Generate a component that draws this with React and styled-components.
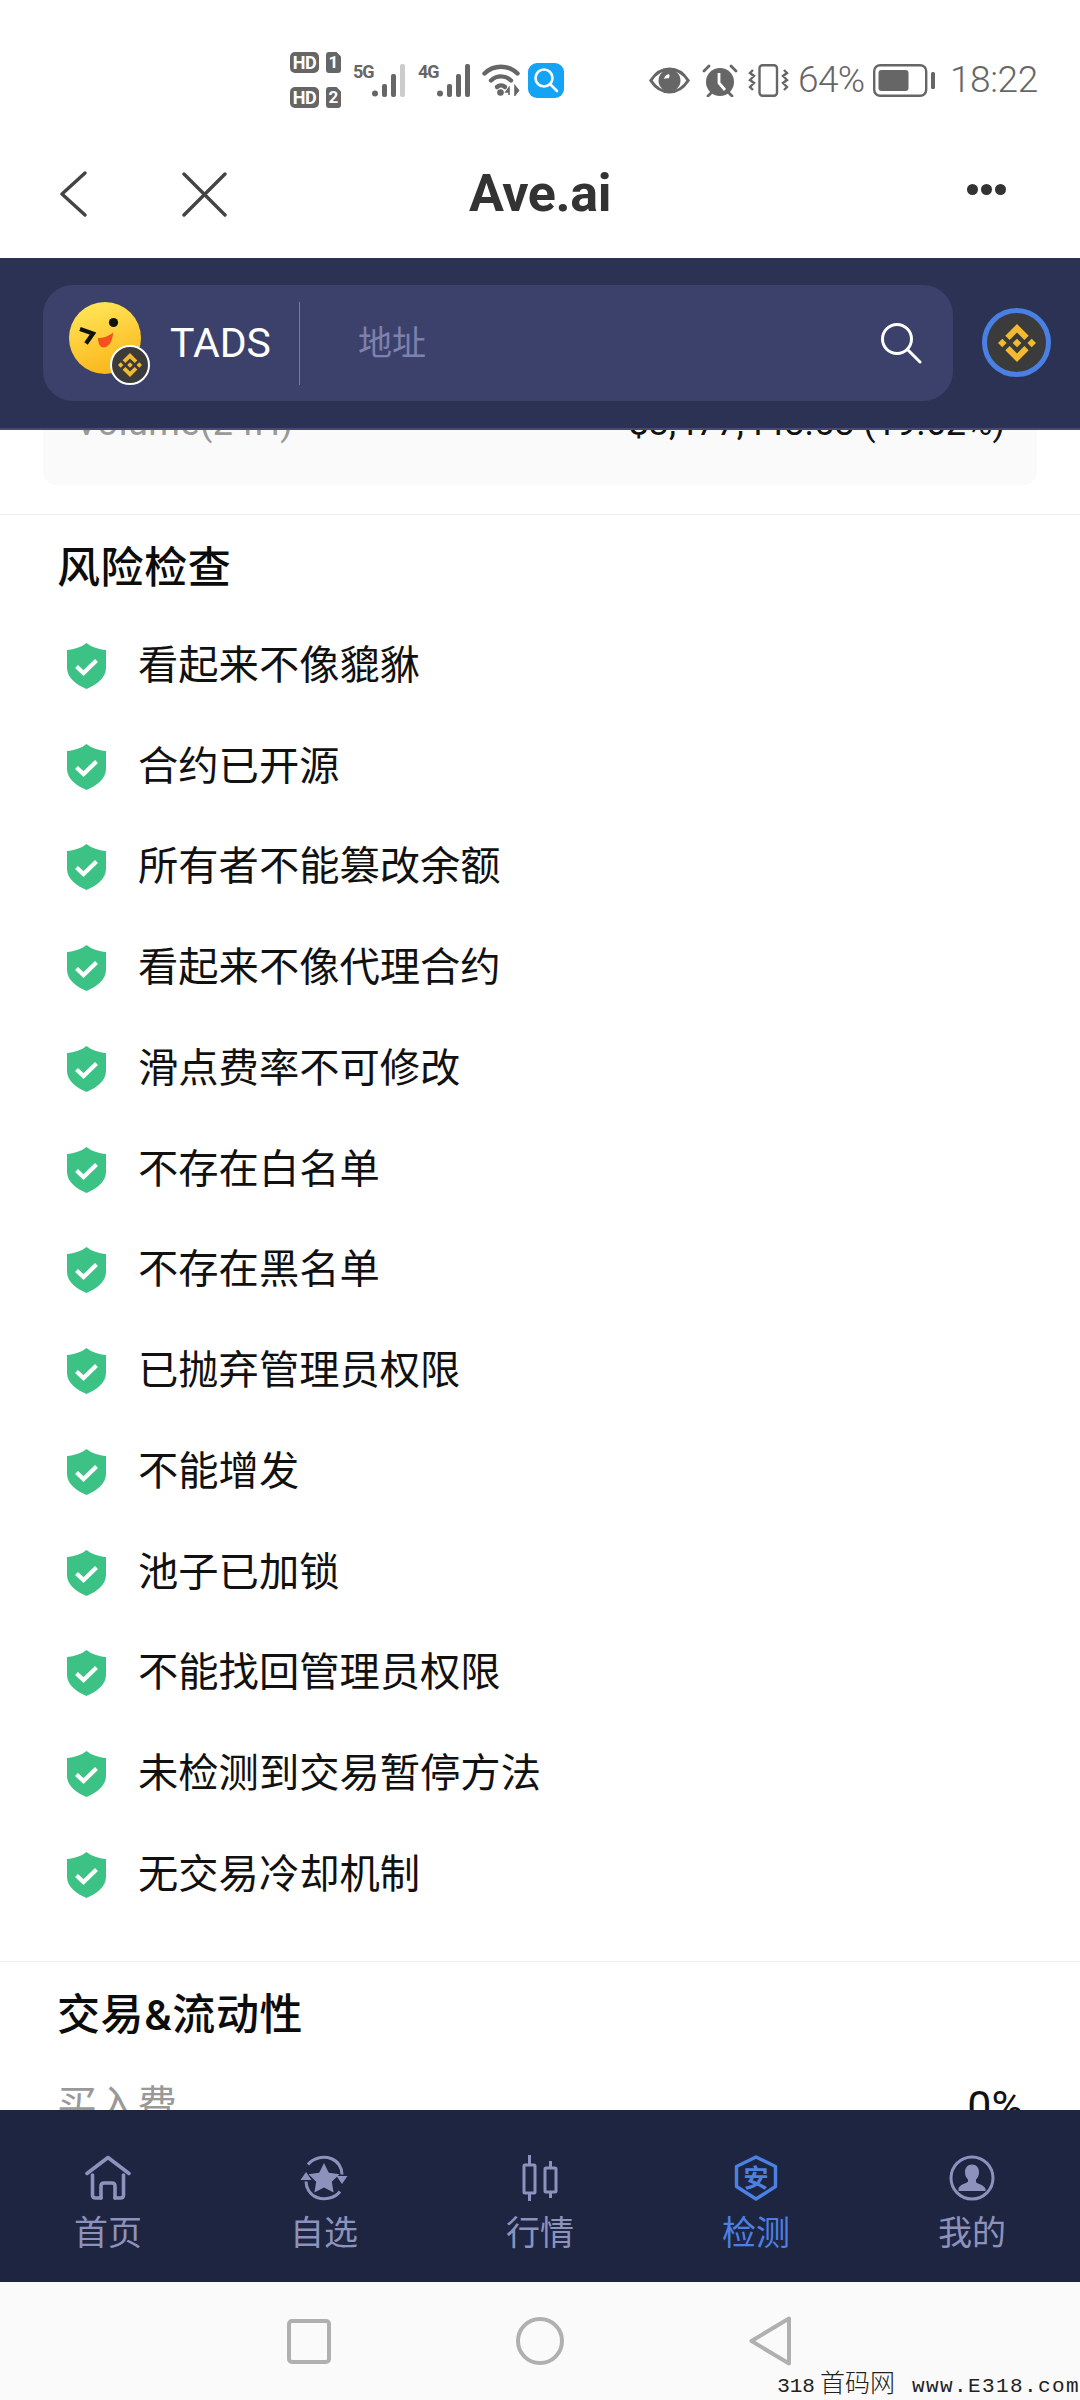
import React from "react";
import styled, { createGlobalStyle } from "styled-components";

const SANS = `Roboto, "Noto Sans CJK SC", sans-serif`;

const Global = createGlobalStyle`
  html, body { margin: 0; padding: 0; background: #fff; }
  * { box-sizing: border-box; }
  body { font-family: ${SANS}; }
`;

const Screen = styled.div`
  width: 1080px;
  height: 2400px;
  display: flex;
  flex-direction: column;
  overflow: hidden;
  position: relative;
  background: #fff;
`;

/* ---------- status bar ---------- */
const StatusBar = styled.div`
  height: 130px;
  padding: 30px 43px 0 290px;
  display: flex;
  align-items: center;
  flex: none;
`;
const StatusLeft = styled.div`
  display: flex;
  align-items: center;
`;
const StatusRight = styled.div`
  margin-left: auto;
  display: flex;
  align-items: center;
  color: #666;
`;
const SimStack = styled.div`
  display: flex;
  flex-direction: column;
  gap: 14px;
  margin-right: 12px;
`;
const SimLine = styled.div`
  display: flex;
  gap: 7px;
`;
const HdTag = styled.span`
  width: 29px;
  height: 21px;
  border-radius: 5px;
  background: #666;
  color: #fff;
  font: 700 18px/21px ${SANS};
  letter-spacing: -0.5px;
  text-align: center;
`;
const SimNum = styled.span`
  width: 15px;
  height: 21px;
  border-radius: 3px;
  background: #666;
  color: #fff;
  font: 700 17px/21px ${SANS};
  text-align: center;
  clip-path: polygon(0 0, 70% 0, 100% 22%, 100% 100%, 0 100%);
`;
const Signal = styled.div`
  display: flex;
  height: 33px;
  margin-right: ${(p) => p.$after}px;
`;
const NetLabel = styled.span`
  width: 19px;
  font: 700 18px/16px ${SANS};
  letter-spacing: -1px;
  color: #666;
  white-space: nowrap;
`;
const Gapped = styled.span`
  display: flex;
  margin-right: ${(p) => p.$after || 0}px;
`;
const Percent = styled.span`
  font: 300 37px/40px ${SANS};
  width: 66px;
  margin-right: 9px;
  white-space: nowrap;
  letter-spacing: -0.6px;
`;
const Clock = styled.span`
  font: 300 37px/40px ${SANS};
  width: 87px;
  white-space: nowrap;
  letter-spacing: -0.4px;
`;

/* ---------- nav ---------- */
const NavBar = styled.div`
  height: 128px;
  flex: none;
  display: grid;
  grid-template-columns: 1fr auto 1fr;
  align-items: center;
  padding: 0 60px;
  background: #fff;
`;
const NavLeft = styled.div`
  display: flex;
  gap: 95px;
  align-items: center;
`;
const NavTitle = styled.div`
  font: 700 52px/60px Roboto, sans-serif;
  color: #333;
  letter-spacing: -0.4px;
`;
const NavRight = styled.div`
  display: flex;
  justify-content: flex-end;
  gap: 3px;
  margin: -10px 14px 0 0;
`;
const Dot = styled.i`
  width: 11px;
  height: 11px;
  border-radius: 50%;
  background: #333;
`;

/* ---------- search header ---------- */
const Header = styled.div`
  height: 172px;
  flex: none;
  background: #2c3254;
  border-bottom: 2px solid #474b70;
  padding: 27px 0 0 43px;
  display: flex;
  align-items: flex-start;
  position: relative;
  z-index: 1;
`;
const Pill = styled.div`
  width: 910px;
  height: 116px;
  border-radius: 30px;
  background: #3c416b;
  display: flex;
  align-items: center;
  padding: 0 31px 0 26px;
`;
const Avatar = styled.div`
  position: relative;
  width: 72px;
  height: 72px;
  flex: none;
  margin-top: -10px;
`;
const BadgeCoin = styled.span`
  position: absolute;
  left: 41px;
  top: 43px;
  width: 40px;
  height: 40px;
  border-radius: 50%;
  background: #3b3b3b;
  border: 2px solid #fff;
  display: flex;
  align-items: center;
  justify-content: center;
`;
const Symbol = styled.span`
  margin-left: 29px;
  width: 99px;
  color: #fff;
  font: 400 41px/44px Roboto, sans-serif;
  white-space: nowrap;
`;
const VDivider = styled.span`
  width: 1px;
  height: 83px;
  background: #777ba0;
  margin-left: 30px;
`;
const Placeholder = styled.span`
  margin-left: 58px;
  font: 400 34px/44px ${SANS};
  color: #7c81ad;
`;
const SearchBtn = styled.span`
  margin-left: auto;
  display: flex;
`;
const ChainBtn = styled.div`
  width: 69px;
  height: 69px;
  border-radius: 50%;
  margin: 23px 0 0 29px;
  background: #3b3b3b;
  border: 5px solid #4a80e4;
  display: flex;
  align-items: center;
  justify-content: center;
`;

/* ---------- content ---------- */
const Content = styled.div`
  flex: 1;
  min-height: 0;
  overflow: hidden;
  background: #fff;
`;
const Card = styled.div`
  margin: -60px 43px 0;
  height: 115px;
  padding: 35px 32px 0;
  background: #fafafa;
  border-radius: 14px;
  display: flex;
  justify-content: space-between;
  font: 400 36px/36px ${SANS};
  white-space: nowrap;
`;
const CardLabel = styled.span`
  color: #999;
  letter-spacing: 0.5px;
`;
const CardValue = styled.span`
  color: #111;
`;
const Section = styled.section`
  margin-top: ${(p) => p.$top || 0}px;
  border-top: 1px solid #eee;
  padding: 22px 0 ${(p) => p.$bottom || 0}px;
`;
const SectionTitle = styled.h2`
  margin: 0 0 0 57px;
  font: 500 43px/62px ${SANS};
  letter-spacing: 0.6px;
  color: #0c0c0c;
`;
const CheckList = styled.div`
  margin-top: 16.6px;
`;
const CheckRow = styled.div`
  height: 100.75px;
  display: flex;
  align-items: center;
  gap: 32px;
  padding-left: 67px;
  font: 400 40.3px/56px ${SANS};
  color: #111;
`;
const FeeRow = styled.div`
  margin-top: 32px;
  padding: 0 57px;
  display: flex;
  justify-content: space-between;
  font: 400 40px/56px ${SANS};
`;
const FeeLabel = styled.span`
  color: #999;
`;
const FeeValue = styled.span`
  color: #111;
  font-size: 43px;
`;

/* ---------- tab bar ---------- */
const TabBar = styled.nav`
  height: 172px;
  flex: none;
  background: #1e2540;
  display: grid;
  grid-template-columns: repeat(5, 1fr);
  padding-top: 45px;
`;
const Tab = styled.div`
  display: flex;
  flex-direction: column;
  align-items: center;
  color: ${(p) => (p.$active ? "#4c80e2" : "#8d92bd")};
  font: 400 34px/44px ${SANS};
`;
const TabIcon = styled.span`
  height: 46px;
  display: flex;
  margin-bottom: 10px;
`;

/* ---------- system nav ---------- */
const SystemNav = styled.div`
  height: 118px;
  flex: none;
  background: #fafafa;
  display: flex;
  align-items: center;
  justify-content: center;
  gap: 185px;
  padding-right: 2px;
`;
const Watermark = styled.div`
  position: absolute;
  right: 0;
  bottom: -2px;
  display: flex;
  align-items: baseline;
  color: #222;
  white-space: nowrap;
`;
const WmLatin = styled.span`
  font: 400 21px/30px "Liberation Mono", monospace;
  letter-spacing: ${(p) => p.$sp}px;
`;
const WmCjk = styled.span`
  font: 300 25px/30px "Noto Sans CJK SC", sans-serif;
  margin: 0 17px 0 5px;
`;

/* ---------- drawings ---------- */
const BNB = ({ size }) => (
  <svg width={size} height={size} viewBox="0 0 126.61 126.61" aria-hidden="true">
    <path
      fill="#f3ba2f"
      d="M38.73 53.2l24.59-24.58 24.6 24.6 14.3-14.31L63.32 0 24.43 38.9zM0 63.31l14.3-14.31 14.31 14.31-14.31 14.3zM38.73 73.41l24.59 24.59 24.6-24.6 14.31 14.29-38.9 38.91-38.91-38.88zM98 63.31l14.3-14.31 14.31 14.3-14.31 14.32zM77.83 63.3L63.32 48.78 52.59 59.51l-1.24 1.23-2.54 2.54 14.51 14.5 14.51-14.47z"
    />
  </svg>
);

const Bars = ({ dim }) => (
  <svg width="34" height="33" viewBox="0 0 34 33" aria-hidden="true">
    <circle cx="3" cy="29.5" r="3" fill="#666" />
    <rect x="10" y="20" width="5" height="13" rx="2" fill="#666" />
    <rect x="19" y="10" width="5" height="23" rx="2" fill="#666" />
    <rect x="28" y="0" width="5" height="33" rx="2" fill={dim ? "#ccc" : "#666"} />
  </svg>
);

const Wifi = () => (
  <svg width="38" height="32" viewBox="0 0 38 32" fill="none" aria-hidden="true">
    <g stroke="#666" strokeWidth="4.4" strokeLinecap="round">
      <path d="M2.5 9.5C11.5 .5 26.5 .5 35.5 9.5" />
      <path d="M9 16.5C14.5 11 23.500 11 29 16.500" />
      <path d="M15 23c2.200-2 5.800-2 8 0" />
    </g>
    <circle cx="18.500" cy="28.500" r="3.300" fill="#666" />
    <path d="M27 31V24l-3 4h3M33 22v9l3.500-4.500z" stroke="#666" strokeWidth="1.600" fill="#666" />
  </svg>
);

const SearchTile = styled.span`
  width: 36px;
  height: 35px;
  margin-left: 8px;
  border-radius: 9px;
  background: #14a3f5;
  display: flex;
  align-items: center;
  justify-content: center;
`;

const Eye = () => (
  <svg width="41" height="27" viewBox="0 0 41 27" fill="none" aria-hidden="true">
    <path d="M1.800 13.500C7 5.500 13 2 20.500 2S34 5.500 39.200 13.500C34 21.500 28 25 20.500 25S7 21.500 1.800 13.500Z" stroke="#666" strokeWidth="3" />
    <circle cx="20.500" cy="13.500" r="11" fill="#666" />
    <path d="M20 7c-3 .5-4.500 2.500-5 5 1.500-1 3.500-1 4.500-.5C20.500 10 21 8.500 20 7Z" fill="#fff" />
  </svg>
);

const Alarm = () => (
  <svg width="36" height="33" viewBox="0 0 36 33" fill="none" aria-hidden="true">
    <circle cx="18" cy="18" r="14" fill="#666" />
    <path d="M17 9v10l6 7" stroke="#fff" strokeWidth="2.800" />
    <path d="M2 7l5-5M34 7l-5-5M6 32l3-3M30 32l-3-3" stroke="#666" strokeWidth="2.800" strokeLinecap="round" />
  </svg>
);

const Vibrate = () => (
  <svg width="41" height="33" viewBox="0 0 41 33" fill="none" aria-hidden="true">
    <rect x="11.500" y="1.200" width="17.500" height="30.600" rx="3" stroke="#666" strokeWidth="2.400" />
    <path d="M5 6l-3 3 4 3-4 4 4 3-4 4 3 3M36 6l3 3-4 3 4 4-4 3 4 4-3 3" stroke="#666" strokeWidth="2.400" />
  </svg>
);

const Battery = () => (
  <svg width="62" height="33" viewBox="0 0 62 33" fill="none" aria-hidden="true">
    <rect x="1.200" y="1.200" width="52" height="30.600" rx="6" stroke="#666" strokeWidth="2.400" />
    <rect x="5.500" y="6" width="30" height="21" rx="3" fill="#666" />
    <rect x="58" y="8" width="4" height="17" rx="1.500" fill="#666" />
  </svg>
);

const Emoji = () => (
  <svg width="72" height="72" viewBox="0 0 72 72" aria-hidden="true">
    <defs>
      <linearGradient id="face" x1="0.300" y1="0" x2="0.600" y2="1">
        <stop offset="0" stopColor="#ffe658" />
        <stop offset="1" stopColor="#fbb51a" />
      </linearGradient>
    </defs>
    <circle cx="36" cy="36" r="36" fill="url(#face)" />
    <circle cx="44.500" cy="20.500" r="4.600" fill="#111" />
    <path d="M11 27l13 4.500-7 10" fill="none" stroke="#111" strokeWidth="4.200" />
    <path d="M29 36c6 0 10-1.500 15-5.500 0 9-5 15-9.500 15C31 45.500 29 41 29 36Z" fill="#f4511e" />
  </svg>
);

const Shield = () => (
  <svg width="39" height="46" viewBox="0 0 39 46" aria-hidden="true" style={{ flex: "none" }}>
    <path d="M19.500 0C24 3.800 32 6.500 39 7V25C39 35 29 42 19.500 46 10 42 0 35 0 25V7C7 6.500 15 3.800 19.500 0Z" fill="#3cc284" />
    <path d="M9.500 23.500l7 6.500 13-12.500" fill="none" stroke="#fff" strokeWidth="4.200" />
  </svg>
);

const TabHome = () => (
  <svg width="46" height="46" viewBox="0 0 46 46" fill="none" stroke="currentColor" strokeWidth="3.600" strokeLinecap="round" strokeLinejoin="round" aria-hidden="true">
    <path d="M2 18.500L23 2.500l21 16" />
    <path d="M7.500 20V40c0 2 1 3 3 3H16V31c0-2 1-3 3-3h8c2 0 3 1 3 3V43h5.500c2 0 3-1 3-3V20" />
    <path d="M16 43h0M30 43h0" />
  </svg>
);

const TabStar = () => (
  <svg width="50" height="46" viewBox="0 0 50 46" fill="none" aria-hidden="true">
    <path d="M9 9.500C14 3 24 .5 32 3.500c7 2.500 11 9 11 16" stroke="currentColor" strokeWidth="3" />
    <path d="M41 36.500C36 43 26 45.500 18 42.500 11 40 7 33 7 26.500" stroke="currentColor" strokeWidth="3" />
    <path d="M1.500 25L7 17l5.500 8zM37.500 21l5.500 8 5.500-8z" fill="currentColor" />
    <path d="M25 8l4.800 9.700 10.700 1.500-7.700 7.500 1.800 10.700L25 32.400l-9.600 5 1.800-10.700-7.700-7.500 10.700-1.500z" fill="currentColor" />
  </svg>
);

const TabCandles = () => (
  <svg width="36" height="46" viewBox="0 0 36 46" fill="none" stroke="currentColor" strokeWidth="3" aria-hidden="true">
    <rect x="2" y="10" width="11" height="28" rx="1" />
    <path d="M7.500 0v10M7.500 38v8" />
    <rect x="23" y="13" width="11" height="24" rx="1" />
    <path d="M28.500 6v7M28.500 37v6" />
  </svg>
);

const TabSafe = () => (
  <svg width="44" height="46" viewBox="0 0 44 46" fill="none" aria-hidden="true">
    <path d="M22 2L41.500 11.500V31.500L22 44 2.500 31.500V11.500Z" stroke="currentColor" strokeWidth="3.400" strokeLinejoin="round" />
    <text x="22" y="31.500" textAnchor="middle" fontSize="25" fontWeight="700" fill="currentColor" fontFamily={`"Noto Sans CJK SC", sans-serif`}>安</text>
  </svg>
);

const TabUser = () => (
  <svg width="46" height="46" viewBox="0 0 46 46" fill="none" aria-hidden="true">
    <circle cx="23" cy="23" r="21" stroke="currentColor" strokeWidth="3" />
    <path d="M23 9.500c4.500 0 7 3.300 7 7.500 0 3-1 5.500-3 7.500v2.500c0 1.500 7.500 2.500 9.500 6.500v2.500h-27V33c2-4 9.500-5 9.500-6.500V24.500c-2-2-3-4.500-3-7.500 0-4.200 2.500-7.500 7-7.500Z" fill="currentColor" />
  </svg>
);

const CHECKS = [
  "看起来不像貔貅",
  "合约已开源",
  "所有者不能篡改余额",
  "看起来不像代理合约",
  "滑点费率不可修改",
  "不存在白名单",
  "不存在黑名单",
  "已抛弃管理员权限",
  "不能增发",
  "池子已加锁",
  "不能找回管理员权限",
  "未检测到交易暂停方法",
  "无交易冷却机制",
];

const TABS = [
  { label: "首页", Icon: TabHome },
  { label: "自选", Icon: TabStar },
  { label: "行情", Icon: TabCandles },
  { label: "检测", Icon: TabSafe, active: true },
  { label: "我的", Icon: TabUser },
];

export default function App() {
  return (
    <Screen>
      <Global />
      <StatusBar>
        <StatusLeft>
          <SimStack>
            <SimLine><HdTag>HD</HdTag><SimNum>1</SimNum></SimLine>
            <SimLine><HdTag>HD</HdTag><SimNum>2</SimNum></SimLine>
          </SimStack>
          <Signal $after={12}><NetLabel>5G</NetLabel><Bars dim /></Signal>
          <Signal $after={11}><NetLabel>4G</NetLabel><Bars /></Signal>
          <Wifi />
          <SearchTile>
            <svg width="26" height="26" viewBox="0 0 26 26" fill="none" stroke="#fff" strokeWidth="2.600" strokeLinecap="round" aria-hidden="true">
              <circle cx="11" cy="11" r="8.500" />
              <path d="M17.500 17.500L24 24" />
            </svg>
          </SearchTile>
        </StatusLeft>
        <StatusRight>
          <Gapped $after={12}><Eye /></Gapped>
          <Gapped $after={10}><Alarm /></Gapped>
          <Gapped $after={9}><Vibrate /></Gapped>
          <Percent>64%</Percent>
          <Gapped $after={15}><Battery /></Gapped>
          <Clock>18:22</Clock>
        </StatusRight>
      </StatusBar>

      <NavBar>
        <NavLeft>
          <svg width="27" height="46" viewBox="0 0 27 46" fill="none" stroke="#444" strokeWidth="3.400" strokeLinecap="round" strokeLinejoin="round" aria-hidden="true">
            <path d="M25 2L2 23l23 21" />
          </svg>
          <svg width="45" height="45" viewBox="0 0 45 45" fill="none" stroke="#444" strokeWidth="3.400" strokeLinecap="round" aria-hidden="true">
            <path d="M2 2l41 41M43 2L2 43" />
          </svg>
        </NavLeft>
        <NavTitle>Ave.ai</NavTitle>
        <NavRight><Dot /><Dot /><Dot /></NavRight>
      </NavBar>

      <Header>
        <Pill>
          <Avatar>
            <Emoji />
            <BadgeCoin><BNB size={24} /></BadgeCoin>
          </Avatar>
          <Symbol>TADS</Symbol>
          <VDivider />
          <Placeholder>地址</Placeholder>
          <SearchBtn>
            <svg width="42" height="42" viewBox="0 0 42 42" fill="none" stroke="#fff" strokeWidth="3" strokeLinecap="round" aria-hidden="true">
              <circle cx="17" cy="17" r="14.500" />
              <path d="M27.500 27.500L40 40" />
            </svg>
          </SearchBtn>
        </Pill>
        <ChainBtn><BNB size={38} /></ChainBtn>
      </Header>

      <Content>
        <Card>
          <CardLabel>Volume(24H)</CardLabel>
          <CardValue>$3,477,448.58 (19.62%)</CardValue>
        </Card>
        <Section $top={29} $bottom={35.6}>
          <SectionTitle>风险检查</SectionTitle>
          <CheckList>
            {CHECKS.map((text) => (
              <CheckRow key={text}>
                <Shield />
                {text}
              </CheckRow>
            ))}
          </CheckList>
        </Section>
        <Section>
          <SectionTitle>交易&amp;流动性</SectionTitle>
          <FeeRow>
            <FeeLabel>买入费</FeeLabel>
            <FeeValue>0%</FeeValue>
          </FeeRow>
        </Section>
      </Content>

      <TabBar>
        {TABS.map(({ label, Icon, active }) => (
          <Tab key={label} $active={active}>
            <TabIcon><Icon /></TabIcon>
            {label}
          </Tab>
        ))}
      </TabBar>

      <SystemNav>
        <svg width="44" height="45" viewBox="0 0 44 45" fill="none" stroke="#b0b0b0" strokeWidth="4" aria-hidden="true">
          <rect x="2" y="2" width="40" height="41" rx="3" />
        </svg>
        <svg width="48" height="48" viewBox="0 0 48 48" fill="none" stroke="#b0b0b0" strokeWidth="4" aria-hidden="true">
          <circle cx="24" cy="24" r="22" />
        </svg>
        <svg width="42" height="50" viewBox="0 0 42 50" fill="none" stroke="#b0b0b0" strokeWidth="4" strokeLinejoin="round" aria-hidden="true">
          <path d="M40 2.500V47.500L2.500 25Z" />
        </svg>
      </SystemNav>

      <Watermark>
        <WmLatin $sp={0}>318</WmLatin>
        <WmCjk>首码网</WmCjk>
        <WmLatin $sp={1.4}>www.E318.com</WmLatin>
      </Watermark>
    </Screen>
  );
}
